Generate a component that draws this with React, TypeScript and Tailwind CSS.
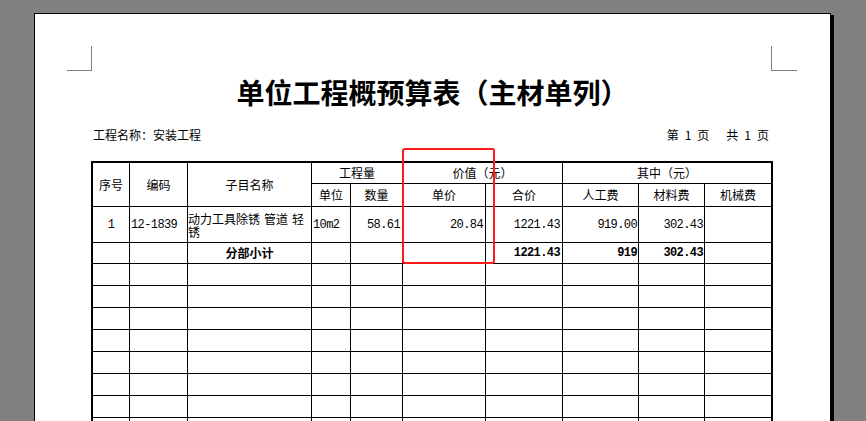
import React from "react";

const cjk = "font-['Noto_Sans_CJK_SC',sans-serif]";
const mono = "font-['Liberation_Mono',monospace] text-[11px] tracking-[-0.6px]";

function C({
  children,
  className = "",
}: {
  children?: React.ReactNode;
  className?: string;
}) {
  return (
    <div className={`bg-white flex items-center text-[12px] leading-[12px] text-black ${className}`}>
      {children}
    </div>
  );
}

export default function App() {
  const emptyRows = Array.from({ length: 8 });
  return (
    <div className={`w-[866px] h-[421px] bg-[#808080] overflow-hidden pt-[13px] pl-[34px] ${cjk}`}>
      <div className="relative w-[797px] h-[500px] bg-white border border-black shadow-[3px_2px_0_#000]">
        <div className="flex justify-between pl-[32px] pr-[33px] pt-[32px]">
          <div className="w-[25px] h-[25px] border-r border-b border-[#808080]" />
          <div className="w-[26px] h-[25px] border-l border-b border-[#808080]" />
        </div>
        <div className="mt-[7px] text-[28px] leading-[28px] text-center font-bold text-black">
          单位工程概预算表（主材单列）
        </div>
        <div className="mt-[21px] ml-[56px] w-[682px] flex justify-between text-[12px] leading-[16px] pl-[2px] pr-[4px] text-black">
          <span>工程名称：安装工程</span>
          <span className="flex">
            <span className="whitespace-pre">{"第\u20021\u2002页"}</span>
            <span className="whitespace-pre ml-[17px]">{"共\u20021\u2002页"}</span>
          </span>
        </div>
        <div className="relative mt-[18px] ml-[56px] w-[682px]">
          <div className="grid bg-black border-2 border-black gap-px grid-cols-[36px_57px_123px_38px_51px_82px_76px_75px_65px_66px] grid-rows-[20px_22px_35px_20px_repeat(8,21px)]">
            <C className="row-span-2 justify-center">序号</C>
            <C className="row-span-2 justify-center">编码</C>
            <C className="row-span-2 justify-center">子目名称</C>
            <C className="col-span-2 justify-center">工程量</C>
            <C className="col-span-2 justify-center">价值（元）</C>
            <C className="col-span-3 justify-center">其中（元）</C>
            <C className="justify-center">单位</C>
            <C className="justify-center">数量</C>
            <C className="justify-center">单价</C>
            <C className="justify-center">合价</C>
            <C className="justify-center">人工费</C>
            <C className="justify-center">材料费</C>
            <C className="justify-center">机械费</C>

            <C className={`justify-center ${mono}`}>1</C>
            <C className={`pl-[1px] ${mono}`}>12-1839</C>
            <C className="items-center overflow-hidden">
              <div className="flex flex-col">
                <div className="h-[13px] leading-[13px] whitespace-pre">{"动力工具除锈\u2004管道\u2004轻"}</div>
                <div className="h-[13px] leading-[13px]">锈</div>
              </div>
            </C>
            <C className={`pl-[1px] ${mono}`}>10m2</C>
            <C className={`justify-end pr-[2px] ${mono}`}>58.61</C>
            <C className={`justify-end pr-[2px] ${mono}`}>20.84</C>
            <C className={`justify-end pr-[2px] ${mono}`}>1221.43</C>
            <C className={`justify-end pr-[1px] ${mono}`}>919.00</C>
            <C className={`justify-end pr-[1px] ${mono}`}>302.43</C>
            <C />

            <C />
            <C />
            <C className="justify-center font-bold">分部小计</C>
            <C />
            <C />
            <C />
            <C className={`justify-end pr-[2px] font-bold ${mono}`}>1221.43</C>
            <C className={`justify-end pr-[1px] font-bold ${mono}`}>919</C>
            <C className={`justify-end pr-[1px] font-bold ${mono}`}>302.43</C>
            <C />

            {emptyRows.map((_, r) => (
              <React.Fragment key={r}>
                <C />
                <C />
                <C />
                <C />
                <C />
                <C />
                <C />
                <C />
                <C />
                <C />
              </React.Fragment>
            ))}
          </div>
          <div className="absolute left-[311px] top-[-13px] w-[93px] h-[116px] border-2 border-[#ff1a1a] rounded-[3px]" />
        </div>
      </div>
    </div>
  );
}
